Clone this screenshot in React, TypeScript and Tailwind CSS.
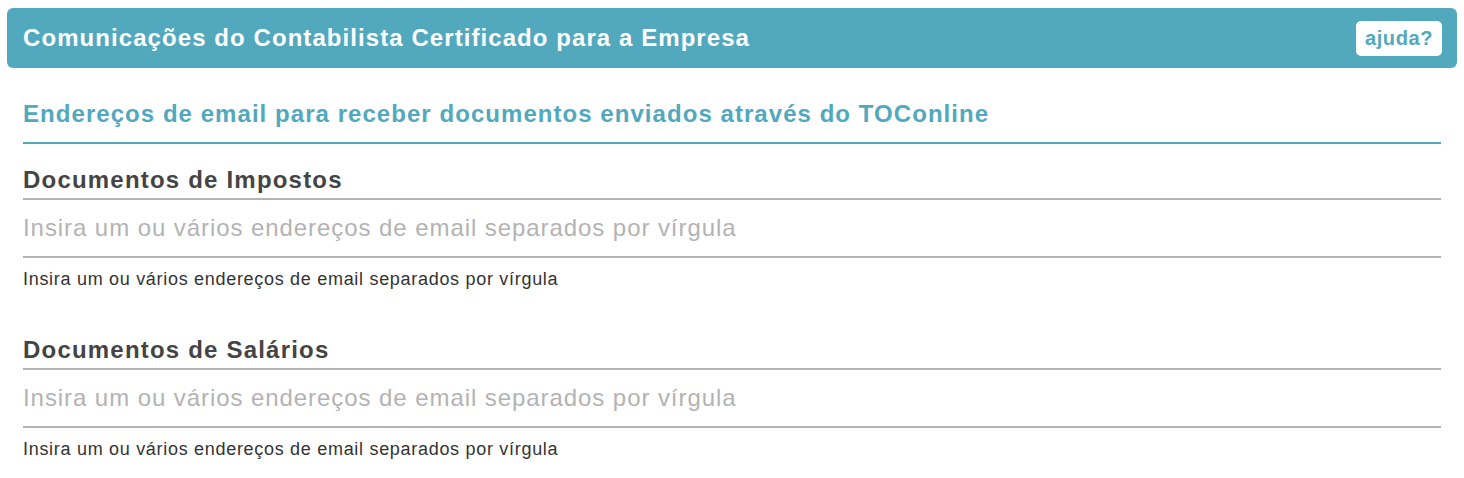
import React from "react";

function Field({ title, className = "" }: { title: string; className?: string }) {
  return (
    <div className={"flex flex-col " + className}>
      <div className="pb-[4px] border-b-2 border-[#b3b3b3]">
        <h3 className="text-[24px] leading-[28px] font-bold text-[#444444] tracking-[1.2px]">{title}</h3>
      </div>
      <div className="h-[58px] flex items-center border-b-2 border-[#b3b3b3]">
        <input
          className="w-full text-[24px] leading-[30px] tracking-[0.93px] text-[#444] placeholder:text-[#b3b3b3] outline-none bg-transparent"
          placeholder="Insira um ou vários endereços de email separados por vírgula"
        />
      </div>
      <p className="mt-[10px] text-[18px] leading-[22px] tracking-[0.7px] text-[#333333]">
        Insira um ou vários endereços de email separados por vírgula
      </p>
    </div>
  );
}

export default function App() {
  return (
    <div className="w-[1464px] h-[478px] bg-white pt-[8px] px-[7px]" style={{ fontFamily: '"Liberation Sans", Arial, sans-serif' }}>
      <div className="h-[60px] rounded-[6px] bg-[#52a8bd] flex items-center justify-between pl-[16px] pr-[15px]">
        <h1 className="text-[24px] leading-[30px] font-bold text-white tracking-[1.07px]">Comunicações do Contabilista Certificado para a Empresa</h1>
        <button className="h-[35px] w-[86px] rounded-[5px] bg-white text-[#52a8bd] text-[20px] font-bold leading-none tracking-[0.6px]">ajuda?</button>
      </div>
      <div className="mx-[16px] mt-[31px]">
        <div className="border-b-2 border-[#52a8bd] pb-[13px]">
          <h2 className="text-[24px] leading-[30px] font-bold text-[#52a8bd] tracking-[1.05px]">
            Endereços de email para receber documentos enviados através do TOConline
          </h2>
        </div>
        <Field title="Documentos de Impostos" className="mt-[22px]" />
        <Field title="Documentos de Salários" className="mt-[46px]" />
      </div>
    </div>
  );
}
